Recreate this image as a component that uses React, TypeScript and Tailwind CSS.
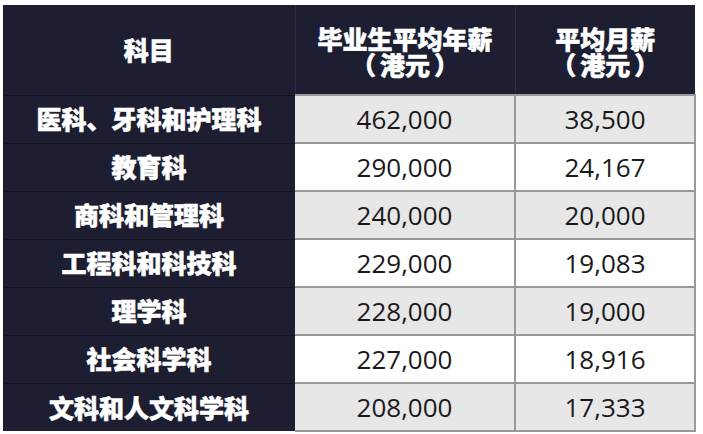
import React from "react";

const rows = [
  { subject: "医科、牙科和护理科", year: "462,000", month: "38,500" },
  { subject: "教育科", year: "290,000", month: "24,167" },
  { subject: "商科和管理科", year: "240,000", month: "20,000" },
  { subject: "工程科和科技科", year: "229,000", month: "19,083" },
  { subject: "理学科", year: "228,000", month: "19,000" },
  { subject: "社会科学科", year: "227,000", month: "18,916" },
  { subject: "文科和人文科学科", year: "208,000", month: "17,333" },
];

const cjk = "font-['Noto_Sans_CJK_SC','Noto_Sans',sans-serif]";
const num = "font-['Open_Sans','Noto_Sans_CJK_SC',sans-serif]";
const heavy = "font-black [-webkit-text-stroke:0.6px_white]";

function Unit() {
  return (
    <div className="leading-[26px]">
      <span className="mr-[4px]">（</span>港元<span className="ml-[4px]">）</span>
    </div>
  );
}

export default function App() {
  return (
    <div className="w-[703px] h-[434px] bg-white pt-[5px] pl-[3px] overflow-hidden">
      <table className="border-collapse table-fixed w-[692px]">
        <colgroup>
          <col className="w-[292px]" />
          <col className="w-[220px]" />
          <col className="w-[180px]" />
        </colgroup>
        <thead>
          <tr className="h-[90px] bg-[#1d1e31] text-white">
            <th className={`${cjk} ${heavy} text-[25px] border-r border-[#2c2d40]`}>科目</th>
            <th className={`${cjk} ${heavy} text-[25px] border-r border-[#2c2d40] pt-[2px]`}>
              <div className="leading-[26px]">毕业生平均年薪</div>
              <Unit />
            </th>
            <th className={`${cjk} ${heavy} text-[25px] pt-[2px]`}>
              <div className="leading-[26px]">平均月薪</div>
              <Unit />
            </th>
          </tr>
        </thead>
        <tbody>
          {rows.map((r, i) => {
            const last = i === rows.length - 1;
            return (
              <tr key={r.subject} className={`h-[48px] ${i % 2 === 0 ? "bg-[#e7e7e7]" : "bg-white"}`}>
                <td
                  className={`${cjk} ${heavy} bg-[#1d1e31] text-white text-[25px] text-center border-t border-[#10111d]`}
                >
                  {r.subject}
                </td>
                <td
                  className={`${num} text-[26px] text-[#1a1a1a] text-center border-t-2 border-r-2 border-[#9a9a9a] ${
                    last ? "border-b-2" : ""
                  }`}
                >
                  {r.year}
                </td>
                <td
                  className={`${num} text-[26px] text-[#1a1a1a] text-center border-t-2 border-r-2 border-[#9a9a9a] ${
                    last ? "border-b-2" : ""
                  }`}
                >
                  {r.month}
                </td>
              </tr>
            );
          })}
        </tbody>
      </table>
    </div>
  );
}
